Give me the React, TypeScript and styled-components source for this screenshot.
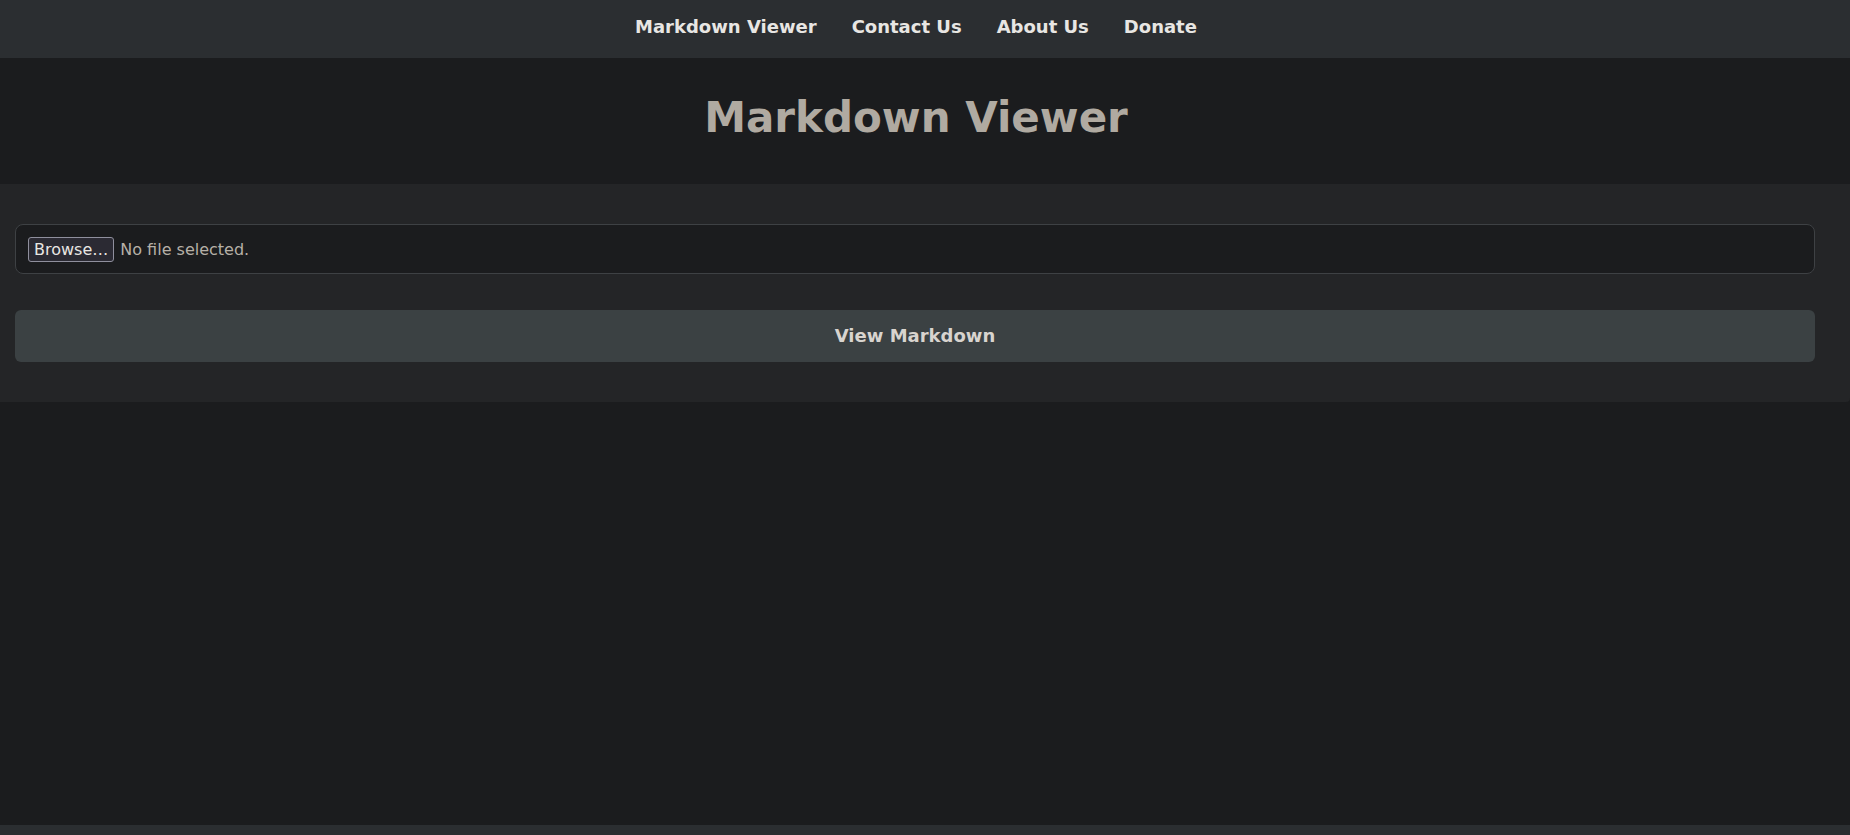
import styled, { createGlobalStyle } from 'styled-components';

const GlobalStyle = createGlobalStyle`
  html, body {
    margin: 0;
    padding: 0;
    background: #1b1c1e;
  }
  body {
    font-family: 'DejaVu Sans', sans-serif;
    font-size: 18px;
    color: #e8e6e3;
  }
  * { box-sizing: border-box; }
`;

const Page = styled.div`
  min-height: 100vh;
  display: flex;
  flex-direction: column;
  background: #1b1c1e;
`;

const NavBar = styled.nav`
  height: 58px;
  background: #2b2e31;
  display: flex;
  justify-content: center;
  align-items: center;
  padding-bottom: 6px;
`;

const NavList = styled.ul`
  list-style: none;
  margin: 0;
  padding: 0 18px 0 0;
  display: flex;
  gap: 35px;
`;

const NavLink = styled.a`
  color: #e8e6e3;
  font-weight: bold;
  font-size: 18px;
  text-decoration: none;
  cursor: pointer;
`;

const Header = styled.header`
  height: 126px;
  display: flex;
  align-items: center;
  justify-content: center;
  padding-right: 18px;
  background: #1b1c1e;
`;

const Title = styled.h1`
  margin: 0 0 8px 0;
  font-size: 42px;
  font-weight: bold;
  color: #b0aaa1;
`;

const Section = styled.section`
  background: #242527;
  border-radius: 0 0 4px 0;
  padding: 40px 35px 40px 15px;
  display: flex;
  flex-direction: column;
  gap: 36px;
`;

const FileBox = styled.label`
  height: 50px;
  display: flex;
  align-items: center;
  gap: 6px;
  padding: 0 12px;
  background: #1b1c1e;
  border: 1px solid #3e4144;
  border-radius: 8px;
  cursor: pointer;

  input { display: none; }
`;

const BrowseButton = styled.span`
  height: 25px;
  display: inline-flex;
  align-items: center;
  padding: 0 5px;
  background: #2b2a33;
  border: 1px solid #8f8f9d;
  border-radius: 3px;
  color: #e8e6e3;
  font-size: 16px;
`;

const FileStatus = styled.span`
  color: #b6b0a7;
  font-size: 16px;
`;

const ViewButton = styled.button`
  height: 52px;
  padding-bottom: 2px;
  background: #3b4143;
  border: none;
  border-radius: 6px;
  color: #d8d4cf;
  font-family: 'DejaVu Sans', sans-serif;
  font-size: 18px;
  font-weight: bold;
  cursor: pointer;
`;

const Spacer = styled.div`
  flex: 1;
`;

const Footer = styled.footer`
  height: 10px;
  background: #2b2e31;
`;

export default function App() {
  return (
    <>
      <GlobalStyle />
      <Page>
        <NavBar>
          <NavList>
            <li><NavLink>Markdown Viewer</NavLink></li>
            <li><NavLink>Contact Us</NavLink></li>
            <li><NavLink>About Us</NavLink></li>
            <li><NavLink>Donate</NavLink></li>
          </NavList>
        </NavBar>
        <Header>
          <Title>Markdown Viewer</Title>
        </Header>
        <Section>
          <FileBox>
            <input type="file" accept=".md" />
            <BrowseButton>Browse…</BrowseButton>
            <FileStatus>No file selected.</FileStatus>
          </FileBox>
          <ViewButton>View Markdown</ViewButton>
        </Section>
        <Spacer />
        <Footer />
      </Page>
    </>
  );
}
